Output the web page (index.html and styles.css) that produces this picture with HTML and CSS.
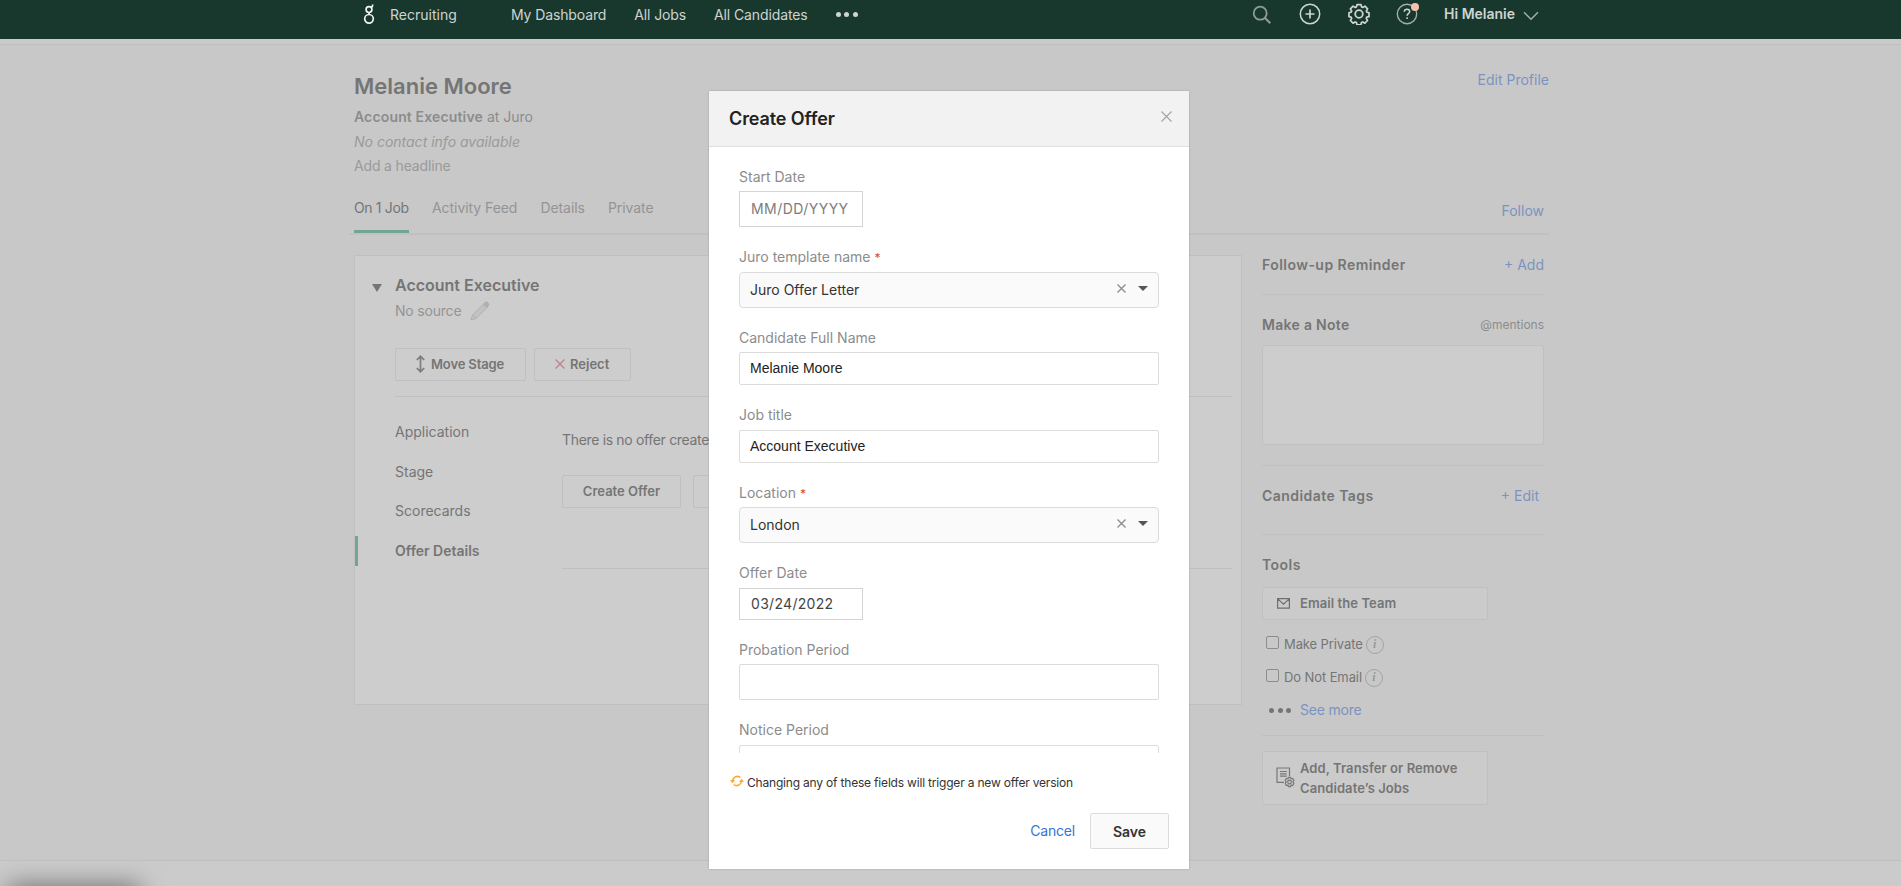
FILE: index.html
```html
<!DOCTYPE html>
<html lang="en">
<head>
  <meta charset="UTF-8" />
  <meta name="viewport" content="width=device-width, initial-scale=1.0" />
  <title>Melanie Moore - Create Offer</title>
  <link rel="stylesheet" href="styles.css">
</head>
<body>
  <header class="topbar">
    <div class="container topbar-inner">
      <svg class="logo" width="14" height="24" viewBox="0 0 14 24" fill="none" stroke="#f2f4f3" stroke-width="1.7">
        <circle cx="7" cy="9.6" r="2.9" />
        <circle cx="7" cy="18.8" r="4.3" />
        <path d="M7 12.5v2M9.1 7.500c1.300-.5 1.700-1.500 1.600-3" />
      </svg>
      <span class="product">Recruiting</span>
      <nav class="nav">
        <a>My Dashboard</a>
        <a>All Jobs</a>
        <a>All Candidates</a>
        <span class="dots"><i></i><i></i><i></i></span>
      </nav>
      <div class="nav-icons">
        <svg width="20" height="20" viewBox="0 0 20 20" fill="none" stroke="#8f9c97" stroke-width="1.8">
          <circle cx="8.2" cy="8.2" r="6.5" />
          <path d="M13 13l5.300 5.300" stroke-width="2" />
        </svg>
        <svg width="22" height="22" viewBox="0 0 22 22" fill="none" stroke="#ced4d1" stroke-width="1.5">
          <circle cx="11" cy="11" r="9.7" />
          <path d="M11 6.500v9M6.500 11h9" stroke-width="1.700" />
        </svg>
        <svg width="22" height="22" viewBox="0 0 22 22" fill="none" stroke="#ced4d1" stroke-width="1.8" stroke-linejoin="round">
          <path d="M8.900 1.200h4.200l.6 2.500 1.300.6 2.300-1.400 2.800 2.900-1.300 2.200.5 1.300 2.300.6v4.100l-2.400.6-.5 1.300 1.300 2.200-2.800 2.800-2.200-1.300-1.400.6-.6 2.400H8.900l-.6-2.400-1.400-.6-2.200 1.300-2.800-2.800 1.300-2.200-.5-1.300-2.300-.6V9.900l2.300-.6.5-1.300-1.300-2.200 2.800-2.900 2.300 1.400 1.300-.6z" transform="translate(.6 .4) scale(.945)" />
          <circle cx="11" cy="11" r="3.800" />
        </svg>
        <span class="help">
          <svg width="22" height="22" viewBox="0 0 22 22" fill="none" stroke="#a3aeaa" stroke-width="1.400">
            <circle cx="11" cy="11" r="9.700" />
            <path d="M8.300 8.800c0-1.700 1.200-2.600 2.700-2.600s2.700.9 2.700 2.300c0 2-2.600 2.200-2.600 4.200M11.100 14.200v1.800" stroke="#ced4d1" stroke-width="1.500" />
          </svg>
          <b class="badge"></b>
        </span>
      </div>
      <span class="user">Hi Melanie</span>
      <svg class="chevron" width="16" height="10" viewBox="0 0 16 10" fill="none" stroke="#a3aeaa" stroke-width="1.500">
        <path d="M1 1.200l7 7 7-7" />
      </svg>
    </div>
  </header>
  <div class="strip"></div>

  <main class="container page">
    <section class="profile">
      <div>
        <h1>Melanie Moore</h1>
        <p class="role"><b>Account Executive</b> at Juro</p>
        <p class="contact">No contact info available</p>
        <p class="headline">Add a headline</p>
      </div>
      <a class="link">Edit Profile</a>
    </section>

    <div class="tabs">
      <a class="tab active">On 1 Job</a>
      <a class="tab">Activity Feed</a>
      <a class="tab">Details</a>
      <a class="tab">Private</a>
      <a class="link follow">Follow</a>
    </div>

    <div class="columns">
      <section class="card">
        <div class="card-head">
          <span class="caret"></span>
          <h2>Account Executive</h2>
        </div>
        <div class="source">
          <span>No source</span>
          <svg width="20" height="20" viewBox="0 0 20 20" fill="#c2c2c2" stroke="#aaa" stroke-width=".8">
            <path d="M1 19l1.500-5L13.500 3l3.500 3.500L6 17.500z" />
            <path d="M13.500 3l2-2c1-1 4.300 2 3.200 3.300L17 6.500z" fill="#b0b0b0" />
            <path d="M2.500 14L6 17.500" />
          </svg>
        </div>
        <div class="stage-actions">
          <button class="btn move">
            <svg width="9" height="18" viewBox="0 0 9 18" fill="none" stroke="#7d7d7d" stroke-width="1.700">
              <path d="M4.500 1.500v15M.8 5l3.700-3.700L8.200 5M.8 13l3.700 3.700L8.200 13" />
            </svg>
            Move Stage
          </button>
          <button class="btn reject">
            <svg width="10" height="10" viewBox="0 0 10 10" fill="none" stroke="#c57f8b" stroke-width="1.300">
              <path d="M.5.5l9 9M9.500.5l-9 9" />
            </svg>
            Reject
          </button>
        </div>
        <div class="card-body">
          <ul class="side-menu">
            <li>Application</li>
            <li>Stage</li>
            <li>Scorecards</li>
            <li class="active">Offer Details</li>
          </ul>
          <div class="offer">
            <p>There is no offer created for this candidate.</p>
            <div class="offer-actions">
              <button class="btn">Create Offer</button>
              <button class="btn blank"></button>
            </div>
          </div>
        </div>
      </section>

      <aside class="sidebar">
        <div class="side-row reminder"><h3>Follow-up Reminder</h3><a class="link">+ Add</a></div>
        <div class="note">
          <div class="side-row"><h3>Make a Note</h3><span class="mentions">@mentions</span></div>
          <div class="note-box"></div>
        </div>
        <div class="side-row tags"><h3>Candidate Tags</h3><a class="link">+ Edit</a></div>
        <div class="tools">
          <h3>Tools</h3>
          <button class="btn tool">
            <svg width="13" height="11" viewBox="0 0 13 11" fill="none" stroke="#6f6f6f" stroke-width="1.200">
              <path d="M.6.6h11.800v9.600H.6zM.8.900l5.700 5.300L12.200.9" />
            </svg>
            Email the Team
          </button>
          <label class="check"><span class="box"></span>Make Private<span class="info">i</span></label>
          <label class="check"><span class="box"></span>Do Not Email<span class="info">i</span></label>
          <div class="more"><span class="dots"><i></i><i></i><i></i></span><a class="link">See more</a></div>
        </div>
        <button class="btn tool jobs">
          <svg width="20" height="22" viewBox="0 0 20 22" fill="none" stroke="#777" stroke-width="1.200">
            <path d="M8 15.400H1V1h12.500v8M4 4.500h6.800M4 6.800h6.800M4 9.100h6.800" />
            <path d="M12.400 10.300h2.200l.4 1.500 1.500-.4 1.400 1.900-1 1.700 1 1.600-1.300 1.900-1.600-.4-.4 1.500h-2.200l-.4-1.500-1.600.4-1.200-1.900 1-1.600-1-1.700 1.300-1.900 1.500.4z" />
            <circle cx="13.500" cy="15" r="1.800" />
          </svg>
          <span>Add, Transfer or Remove Candidate’s Jobs</span>
        </button>
      </aside>
    </div>
  </main>

  <footer class="footer"><div class="status-shadow"></div></footer>

  <div class="modal">
    <div class="modal-header">
      <h2>Create Offer</h2>
      <svg class="close" width="11" height="11" viewBox="0 0 11 11" fill="none" stroke="#a3a3a3" stroke-width="1.100">
        <path d="M.5.5l10 10M10.500.5l-10 10" />
      </svg>
    </div>
    <form class="modal-body">
      <label>Start Date</label>
      <input class="input date tall" type="text" placeholder="MM/DD/YYYY">
      <label>Juro template name <em>*</em></label>
      <div class="select">
        Juro Offer Letter
        <svg width="9" height="9" viewBox="0 0 9 9" stroke="#8c8c8c" stroke-width="1.300"><path d="M.5.5l8 8M8.500.5l-8 8" /></svg>
        <span class="arrow"></span>
      </div>
      <label>Candidate Full Name</label>
      <input class="input" type="text" value="Melanie Moore">
      <label>Job title</label>
      <input class="input" type="text" value="Account Executive">
      <label>Location <em>*</em></label>
      <div class="select">
        London
        <svg width="9" height="9" viewBox="0 0 9 9" stroke="#8c8c8c" stroke-width="1.300"><path d="M.5.5l8 8M8.500.5l-8 8" /></svg>
        <span class="arrow"></span>
      </div>
      <label>Offer Date</label>
      <input class="input date" type="text" value="03/24/2022">
      <label>Probation Period</label>
      <input class="input tall" type="text">
      <label>Notice Period</label>
      <input class="input tall" type="text">
    </form>
    <div class="modal-footer">
      <p class="notice">
        <svg width="14" height="12" viewBox="0 0 14 12" fill="none" stroke="#f9a833" stroke-width="1.600">
          <path d="M2.600 5.500A4.700 4.700 0 0 1 10.300 2.500M11.400 6.500A4.700 4.700 0 0 1 3.700 9.500" />
          <path d="M0 5h5L2.400 8.300zM14 7H9l2.600-3.300z" fill="#f9a833" stroke="none" />
        </svg>
        Changing any of these fields will trigger a new offer version
      </p>
      <div class="modal-actions">
        <a class="cancel">Cancel</a>
        <button class="save">Save</button>
      </div>
    </div>
  </div>
</body>
</html>
```

FILE: styles.css
```css
* {
  margin: 0;
  padding: 0;
  box-sizing: border-box;
}

body {
  font-family: Inter, "Liberation Sans", sans-serif;
  font-size: 14px;
  line-height: 20px;
  color: #757575;
  background-color: #c8c8c8;
  height: 886px;
  overflow: hidden;
  display: flex;
  flex-direction: column;
}

button,
input {
  font-family: inherit;
}

svg {
  display: block;
  flex: none;
}

.container {
  width: 1195px;
  margin-left: 354px;
}

.link {
  color: #7b93c0;
}

.dots {
  display: flex;
  gap: 3.5px;
}

.dots i {
  width: 5px;
  height: 5px;
  border-radius: 50%;
  background-color: #ced4d1;
}

/* Top bar */
.topbar {
  height: 39px;
  background-color: #18382d;
  color: #ced4d1;
  flex: none;
}

.topbar-inner {
  display: flex;
  align-items: flex-start;
}

.logo {
  margin-left: 8px;
}

.product {
  margin: 5px 54px 0 14px;
  width: 67px;
}

.nav {
  display: flex;
  gap: 28px;
  margin-top: 5px;
  letter-spacing: -0.120px;
  white-space: nowrap;
}

.nav .dots {
  margin-top: 7px;
}

.nav-icons {
  display: flex;
  margin-left: auto;
  padding-top: 3px;
  gap: 26.500px;
}

.nav-icons > svg:first-child {
  margin: 2px 1px 0 0;
}

.help {
  position: relative;
}

.badge {
  position: absolute;
  top: 0;
  right: -1px;
  width: 8px;
  height: 8px;
  border-radius: 50%;
  background-color: #f7c3a8;
}

.user {
  margin: 4px 0 0 26px;
  width: 71px;
  font-weight: 600;
  white-space: nowrap;
}

.chevron {
  margin: 11px 10px 0 8px;
}

.strip {
  height: 6px;
  flex: none;
  background-color: #cacaca;
  border-bottom: 1px solid #bfbfbf;
}

/* Profile */
.profile {
  display: flex;
  justify-content: space-between;
  padding-top: 25px;
  height: 148px;
}

.profile h1 {
  font-size: 22px;
  font-weight: 600;
  line-height: 33px;
}

.profile p {
  line-height: 24.500px;
}

.role {
  margin-top: 2px;
  color: #8c8c8c;
}

.role b {
  font-weight: 600;
  letter-spacing: 0.150px;
}

.contact {
  font-style: italic;
  color: #9a9a9a;
}

.headline {
  letter-spacing: -0.160px;
  color: #9a9a9a;
}

.tabs {
  display: flex;
  gap: 23px;
  width: 1200px;
  height: 42px;
  margin-left: -5px;
  padding: 5px 5px 0 5px;
  border-bottom: 2px solid #c1c1c1;
}

.tab {
  height: 35px;
  letter-spacing: -0.060px;
  color: #949494;
}

.tab.active {
  width: 55px;
  letter-spacing: -0.350px;
  white-space: nowrap;
  color: #757575;
  border-bottom: 3px solid #73a593;
}

.follow {
  margin: 3px 0 0 auto;
}

.columns {
  display: flex;
  align-items: flex-start;
  margin-top: 20px;
}

/* Job card */
.card {
  width: 888px;
  height: 450px;
  background-color: #cdcdcd;
  border: 1px solid #c0c0c0;
}

.card-head {
  display: flex;
  align-items: center;
  padding: 17px 0 0 17px;
}

.caret {
  border: 5px solid transparent;
  border-top: 8px solid #757575;
  border-bottom: 0;
  margin-top: 6px;
}

.card-head h2 {
  margin-left: 13px;
  font-size: 16px;
  font-weight: 600;
  line-height: 24px;
}

.source {
  display: flex;
  gap: 9px;
  padding: 4px 0 0 40px;
  color: #949494;
  letter-spacing: -0.200px;
}

.btn {
  display: flex;
  align-items: center;
  height: 33px;
  padding-bottom: 1px;
  border: 1px solid #c0c0c0;
  border-radius: 2px;
  background-color: #cdcdcd;
  color: #757575;
  font-size: 13px;
  font-weight: 600;
  line-height: 20px;
}

.stage-actions {
  display: flex;
  gap: 8px;
  height: 49px;
  margin: 27px 9px 0 40px;
  border-bottom: 1px solid #c0c0c0;
}

.move {
  width: 131px;
  padding-left: 20px;
  gap: 6px;
  letter-spacing: -0.140px;
}

.reject {
  width: 97px;
  padding-left: 20px;
  gap: 5px;
}

.card-body {
  display: flex;
}

.side-menu {
  width: 207px;
  padding-top: 20px;
  list-style: none;
}

.side-menu li {
  height: 30px;
  margin-bottom: 9.500px;
  padding-left: 40px;
  line-height: 30px;
}

.side-menu .active {
  padding-left: 37px;
  border-left: 3px solid #73a593;
  font-weight: 600;
}

.offer {
  flex: 1;
  height: 172px;
  margin-right: 9px;
  padding-top: 33px;
  border-bottom: 1px solid #c0c0c0;
}

.offer p {
  letter-spacing: -0.330px;
}

.offer-actions {
  display: flex;
  gap: 12px;
  margin-top: 25px;
}

.offer-actions .btn {
  width: 119px;
  justify-content: center;
}

/* Sidebar */
.sidebar {
  width: 282px;
  margin-left: 20px;
}

.sidebar h3 {
  font-size: 14px;
  font-weight: 600;
  letter-spacing: 0.450px;
}

.side-row {
  display: flex;
  justify-content: space-between;
}

.reminder {
  height: 40px;
  border-bottom: 1px solid #c0c0c0;
}

.note {
  height: 171px;
  padding-top: 20px;
  border-bottom: 1px solid #c0c0c0;
}

.note .side-row h3 {
  letter-spacing: 0.300px;
}

.mentions {
  font-size: 12px;
  color: #8c8c8c;
}

.note-box {
  height: 100px;
  margin-top: 10px;
  border: 1px solid #c0c0c0;
  border-radius: 3px;
  background-color: #cdcdcd;
}

.tags {
  height: 69px;
  padding: 20px 5px 0 0;
  border-bottom: 1px solid #c0c0c0;
}

.tools {
  height: 201px;
  padding-top: 20px;
  border-bottom: 1px solid #c0c0c0;
}

.tool {
  width: 226px;
  margin-top: 12px;
  padding-left: 14px;
  gap: 10px;
  background-color: #cbcbcb;
  letter-spacing: 0.080px;
  text-align: left;
}

.check {
  display: flex;
  height: 33px;
  padding-left: 4px;
  font-size: 13px;
  letter-spacing: -0.100px;
}

.tool + .check {
  margin-top: 14px;
}

.box {
  width: 13px;
  height: 13px;
  margin: 2px 5px 0 0;
  border: 1px solid #8c8c8c;
  border-radius: 2px;
}

.info {
  width: 18px;
  height: 18px;
  margin: 2px 0 0 3px;
  border: 1px solid #a3a3a3;
  border-radius: 50%;
  font: italic bold 12px/15px "Liberation Serif", serif;
  text-align: center;
  color: #9a9a9a;
}

.more {
  display: flex;
  align-items: center;
  gap: 9px;
  padding-left: 7px;
  letter-spacing: -0.200px;
}

.more .dots i {
  background-color: #757575;
}

.jobs {
  height: 54px;
  margin-top: 15px;
  padding-left: 13px;
  gap: 4px;
}

.jobs span {
  width: 170px;
}

/* Footer */
.footer {
  position: absolute;
  top: 860px;
  left: 0;
  right: 0;
  height: 26px;
  overflow: hidden;
  border-top: 1px solid #bebebe;
  background-color: #cbcbcb;
}

.status-shadow {
  width: 124px;
  height: 20px;
  margin: 28px 0 0 12px;
  box-shadow: 0 0 24px 4px #707070;
}

/* Create offer modal */
.modal {
  position: absolute;
  top: 91px;
  left: 709px;
  width: 480px;
  height: 778px;
  display: flex;
  flex-direction: column;
  background-color: #fff;
  box-shadow: 0 0 2px rgba(0, 0, 0, 0.200);
}

.modal-header {
  display: flex;
  justify-content: space-between;
  height: 56px;
  padding: 16px 17px 0 20px;
  border-bottom: 1px solid #dfdfdf;
  background-color: #f2f2f2;
}

.modal-header h2 {
  font-size: 18px;
  font-weight: 600;
  line-height: 24px;
  letter-spacing: -0.100px;
  color: #222;
}

.close {
  margin-top: 4px;
}

.modal-body {
  height: 606px;
  padding: 19.500px 30px 0;
  overflow: hidden;
}

.modal-body label {
  display: block;
  height: 24.500px;
  color: #8c8c8c;
}

.modal-body em {
  font-style: normal;
  font-size: 12px;
  color: #e0453a;
}

.input {
  display: block;
  width: 420px;
  height: 33px;
  margin-bottom: 20px;
  padding: 0 10px 1px;
  border: 1px solid #dcdcdc;
  border-radius: 2px;
  background-color: #fff;
  font: 14px "Liberation Sans", sans-serif;
  color: #222;
}

.input.tall {
  height: 36px;
}

.input.date {
  width: 124px;
  border-radius: 0;
  border-color: #d4d4d4;
  padding: 0 11px 1px;
  font-family: Inter, sans-serif;
  letter-spacing: 0.300px;
  color: #444;
}

.input.date:not(.tall) {
  height: 32px;
}

.input::placeholder {
  color: #7d7d7d;
  letter-spacing: 0.450px;
  opacity: 1;
}

.select {
  display: flex;
  align-items: center;
  height: 36px;
  margin-bottom: 20px;
  padding: 0 10px;
  border: 1px solid #dcdcdc;
  border-radius: 4px;
  background-color: #fafafa;
  color: #333;
}

.select svg {
  margin: -3px 12px 0 auto;
}

.arrow {
  border: 5px solid transparent;
  border-top-color: #555;
  border-bottom: 0;
  margin-top: -3px;
}

.modal-footer {
  padding: 20px 20px 0;
}

.notice {
  display: flex;
  gap: 3px;
  padding-left: 1px;
  font-size: 12px;
  line-height: 20px;
  letter-spacing: -0.190px;
  white-space: nowrap;
  color: #333;
}

.notice svg {
  margin-top: 2px;
}

.modal-actions {
  display: flex;
  justify-content: flex-end;
  align-items: center;
  gap: 15px;
  margin-top: 20px;
}

.cancel {
  letter-spacing: -0.200px;
  color: #3574d6;
}

.save {
  width: 79px;
  height: 36px;
  border: 1px solid #dcdcdc;
  border-radius: 2px;
  background-color: #fafafa;
  font-size: 14px;
  font-weight: 600;
  color: #333;
}
```
